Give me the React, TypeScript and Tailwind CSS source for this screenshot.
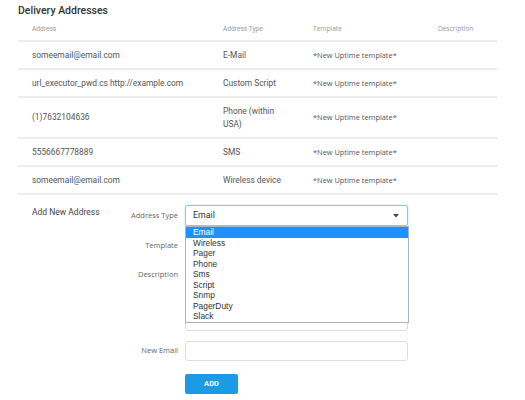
import React from 'react';

interface AddressRow {
  address: string;
  type: string[];
  template: string;
  description: string;
}

const rows: AddressRow[] = [
  { address: 'someemail@email.com', type: ['E-Mail'], template: '*New Uptime template*', description: '' },
  { address: 'url_executor_pwd.cs http://example.com', type: ['Custom Script'], template: '*New Uptime template*', description: '' },
  { address: '(1)7632104636', type: ['Phone (within', 'USA)'], template: '*New Uptime template*', description: '' },
  { address: '5556667778889', type: ['SMS'], template: '*New Uptime template*', description: '' },
  { address: 'someemail@email.com', type: ['Wireless device'], template: '*New Uptime template*', description: '' },
];

const typeOptions = ['Email', 'Wireless', 'Pager', 'Phone', 'Sms', 'Script', 'Snmp', 'PagerDuty', 'Slack'];

const roboto = "font-['Roboto',sans-serif]";
const openSans = "font-['Open_Sans',sans-serif]";

export default function App() {
  return (
    <div className={`w-[525px] h-[400px] bg-white pl-[18px] pr-[28px] pt-[3px] ${roboto}`}>
      <h2 className="text-[10.5px] leading-[16px] font-medium text-[#333]">Delivery Addresses</h2>

      <div className="flex h-[23px] pt-[6px] pl-[14px] border-b-2 border-[#ececec] text-[6.6px] leading-[8px] text-[#999]">
        <div className="w-[191px]">Address</div>
        <div className="w-[90px]">Address Type</div>
        <div className={`w-[125px] ${openSans}`}>Template</div>
        <div className={openSans}>Description</div>
      </div>

      {rows.map((row, i) => (
        <div
          key={i}
          className="flex items-center pl-[14px] py-[6.5px] border-b-2 border-[#ececec] text-[8.4px] leading-[13px] text-[#555]"
        >
          <div className="w-[191px]">{row.address}</div>
          <div className="w-[90px]">
            {row.type.map((t) => (
              <div key={t}>{t}</div>
            ))}
          </div>
          <div className={`w-[125px] text-[7.4px] ${openSans}`}>{row.template}</div>
          <div>{row.description}</div>
        </div>
      ))}

      <div className="flex pl-[14px] mt-[10px]">
        <div className="w-[90px] pt-[1px] text-[8.5px] leading-[12px] text-[#444]">Add New Address</div>

        <div className={`grid grid-cols-[56px_223px] gap-x-[7px] text-[7.5px] text-[#666] ${openSans}`}>
          <div className="text-right self-center">Address Type</div>
          <div className="relative">
            <div className={`flex items-center justify-between h-[21px] px-[7px] border border-[#8ec5ef] rounded-[2px] shadow-[0_0_2px_#b9dcf6] text-[8.8px] text-[#333] ${roboto}`}>
              <span>Email</span>
              <svg width="6" height="4" viewBox="0 0 6 4" className="mr-[1px]">
                <path d="M0 0 L6 0 L3 3.5 Z" fill="#444" />
              </svg>
            </div>
            <div className="absolute left-0 top-[21px] z-10 w-[224px] bg-white border border-[#a6b4cc] font-['Liberation_Sans',Arial,sans-serif] text-[8.4px] leading-[10.5px] text-[#333]">
              {typeOptions.map((opt, i) => (
                <div
                  key={opt}
                  className={i === 0 ? 'pl-[7px] bg-[#1e90ff] text-white' : 'pl-[7px]'}
                >
                  {opt}
                </div>
              ))}
            </div>
          </div>

          <div className="text-right self-center mt-[9px]">Template</div>
          <div className="mt-[9px] h-[21px] border border-[#ddd] rounded-[3px]" />

          <div className="text-right pt-[5px] mt-[8px]">Description</div>
          <div className="mt-[8px] h-[67px] border border-[#ddd] rounded-[3px]" />

          <div className="text-right self-center mt-[10px]">New Email</div>
          <div className="mt-[10px] h-[20px] border border-[#ddd] rounded-[3px]" />

          <div />
          <div className="mt-[13px]">
            <button className={`w-[53px] h-[20px] bg-[#1a9be3] rounded-[2px] text-white text-[7.5px] font-bold ${roboto}`}>
              ADD
            </button>
          </div>
        </div>
      </div>
    </div>
  );
}
